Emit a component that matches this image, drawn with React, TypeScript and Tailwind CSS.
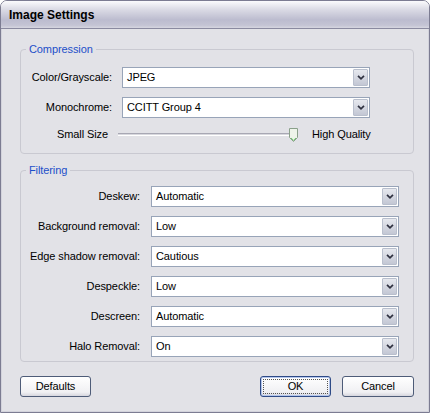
import type { ReactNode } from 'react'

const font = { fontFamily: '"Liberation Sans", Arial, sans-serif' }

function Combo({ value }: { value: string }) {
  return (
    <div className="flex h-[21px] items-stretch border border-[#98a4b8] bg-white">
      <span className="flex-1 pl-[4px] leading-[19px] text-black">{value}</span>
      <span className="m-px flex w-[15px] items-center justify-center rounded-[1px] border border-[#b9bfcd] bg-[linear-gradient(to_bottom,#e6e8ee,#c3c7d4)]">
        <svg width="8" height="5" viewBox="0 0 8 5">
          <path d="M1 0.8 L4 3.8 L7 0.8" stroke="#2f3140" strokeWidth="1.7" fill="none" />
        </svg>
      </span>
    </div>
  )
}

function Group({ title, className, children }: { title: string; className: string; children: ReactNode }) {
  return (
    <div className={`rounded-[4px] border border-[#c9c9d1] ${className}`}>
      <div className="-mt-[7px] ml-[5px] w-fit bg-[#e2e2e7] px-[3px] leading-[13px] text-[#1d4fc9]">{title}</div>
      {children}
    </div>
  )
}

function Row({ label, value }: { label: string; value: string }) {
  return (
    <>
      <span className="text-right text-black">{label}</span>
      <Combo value={value} />
    </>
  )
}

export default function App() {
  return (
    <div className="h-[415px] w-[432px] bg-white text-[11px] tracking-[-0.1px]" style={font}>
      <div className="flex h-[413px] w-[430px] flex-col overflow-hidden rounded-t-[7px] border border-[#7c7c92]">
        <div className="flex h-[28px] items-center border-b border-[#8a8aa0] bg-[linear-gradient(to_bottom,#fbfbfd,#dcdce6_30%,#bcbccf_70%,#c4c4d4_90%,#d6d6e0)] pl-[8px]">
          <span className="text-[12px] font-bold tracking-normal text-black">Image Settings</span>
        </div>
        <div className="flex flex-1 flex-col border-x border-b border-[#d3d3dc] bg-[#e2e2e7] pl-[18px] pr-[14px]">
          <Group title="Compression" className="mt-[20px] pb-[8px]">
            <div className="mt-[11px] grid grid-cols-[91px_248px] items-center gap-x-[10px] gap-y-[9px]">
              <Row label="Color/Grayscale:" value="JPEG" />
              <Row label="Monochrome:" value="CCITT Group 4" />
            </div>
            <div className="mt-[5px] flex h-[22px] items-center">
              <span className="ml-[36px] w-[61px] text-black">Small Size</span>
              <div className="relative flex h-full w-[180px] items-center">
                <div className="h-[3px] w-[175px] border-t border-[#a8a8b4] border-b border-b-white bg-[#d8d8de]" />
                <svg className="absolute left-[171px] top-[5px]" width="9" height="14" viewBox="0 0 9 14">
                  <path d="M0.5 0.5 H8.5 V9.5 L4.5 13.5 L0.5 9.5 Z" fill="#eef4ea" stroke="#8aa08a" />
                  <path d="M2 10 L4.5 12.3 L7 10" stroke="#6fc36f" fill="none" />
                </svg>
              </div>
              <span className="ml-[14px] text-black">High Quality</span>
            </div>
          </Group>
          <Group title="Filtering" className="mt-[16px] pb-[4px]">
            <div className="mt-[9px] grid grid-cols-[119px_248px] items-center gap-x-[11px] gap-y-[9px]">
              <Row label="Deskew:" value="Automatic" />
              <Row label="Background removal:" value="Low" />
              <Row label="Edge shadow removal:" value="Cautious" />
              <Row label="Despeckle:" value="Low" />
              <Row label="Descreen:" value="Automatic" />
              <Row label="Halo Removal:" value="On" />
            </div>
          </Group>
          <div className="mt-[14px] flex items-center">
            <button className="h-[21px] w-[71px] rounded-[3px] border border-[#4e5c78] bg-[linear-gradient(to_bottom,#ffffff,#f0f0f3_80%,#d6d6de)] text-black">
              Defaults
            </button>
            <button className="ml-auto flex h-[21px] w-[71px] items-center justify-center rounded-[3px] border border-[#2e4a86] bg-[linear-gradient(to_bottom,#ffffff,#f0f0f3_80%,#d6d6de)] p-[2px] text-black shadow-[inset_0_0_0_1px_#b4c6ec]">
              <span className="flex h-full w-full items-center justify-center border border-dotted border-[#555]">OK</span>
            </button>
            <button className="ml-[11px] h-[21px] w-[72px] rounded-[3px] border border-[#4e5c78] bg-[linear-gradient(to_bottom,#ffffff,#f0f0f3_80%,#d6d6de)] text-black">
              Cancel
            </button>
          </div>
        </div>
      </div>
    </div>
  )
}
